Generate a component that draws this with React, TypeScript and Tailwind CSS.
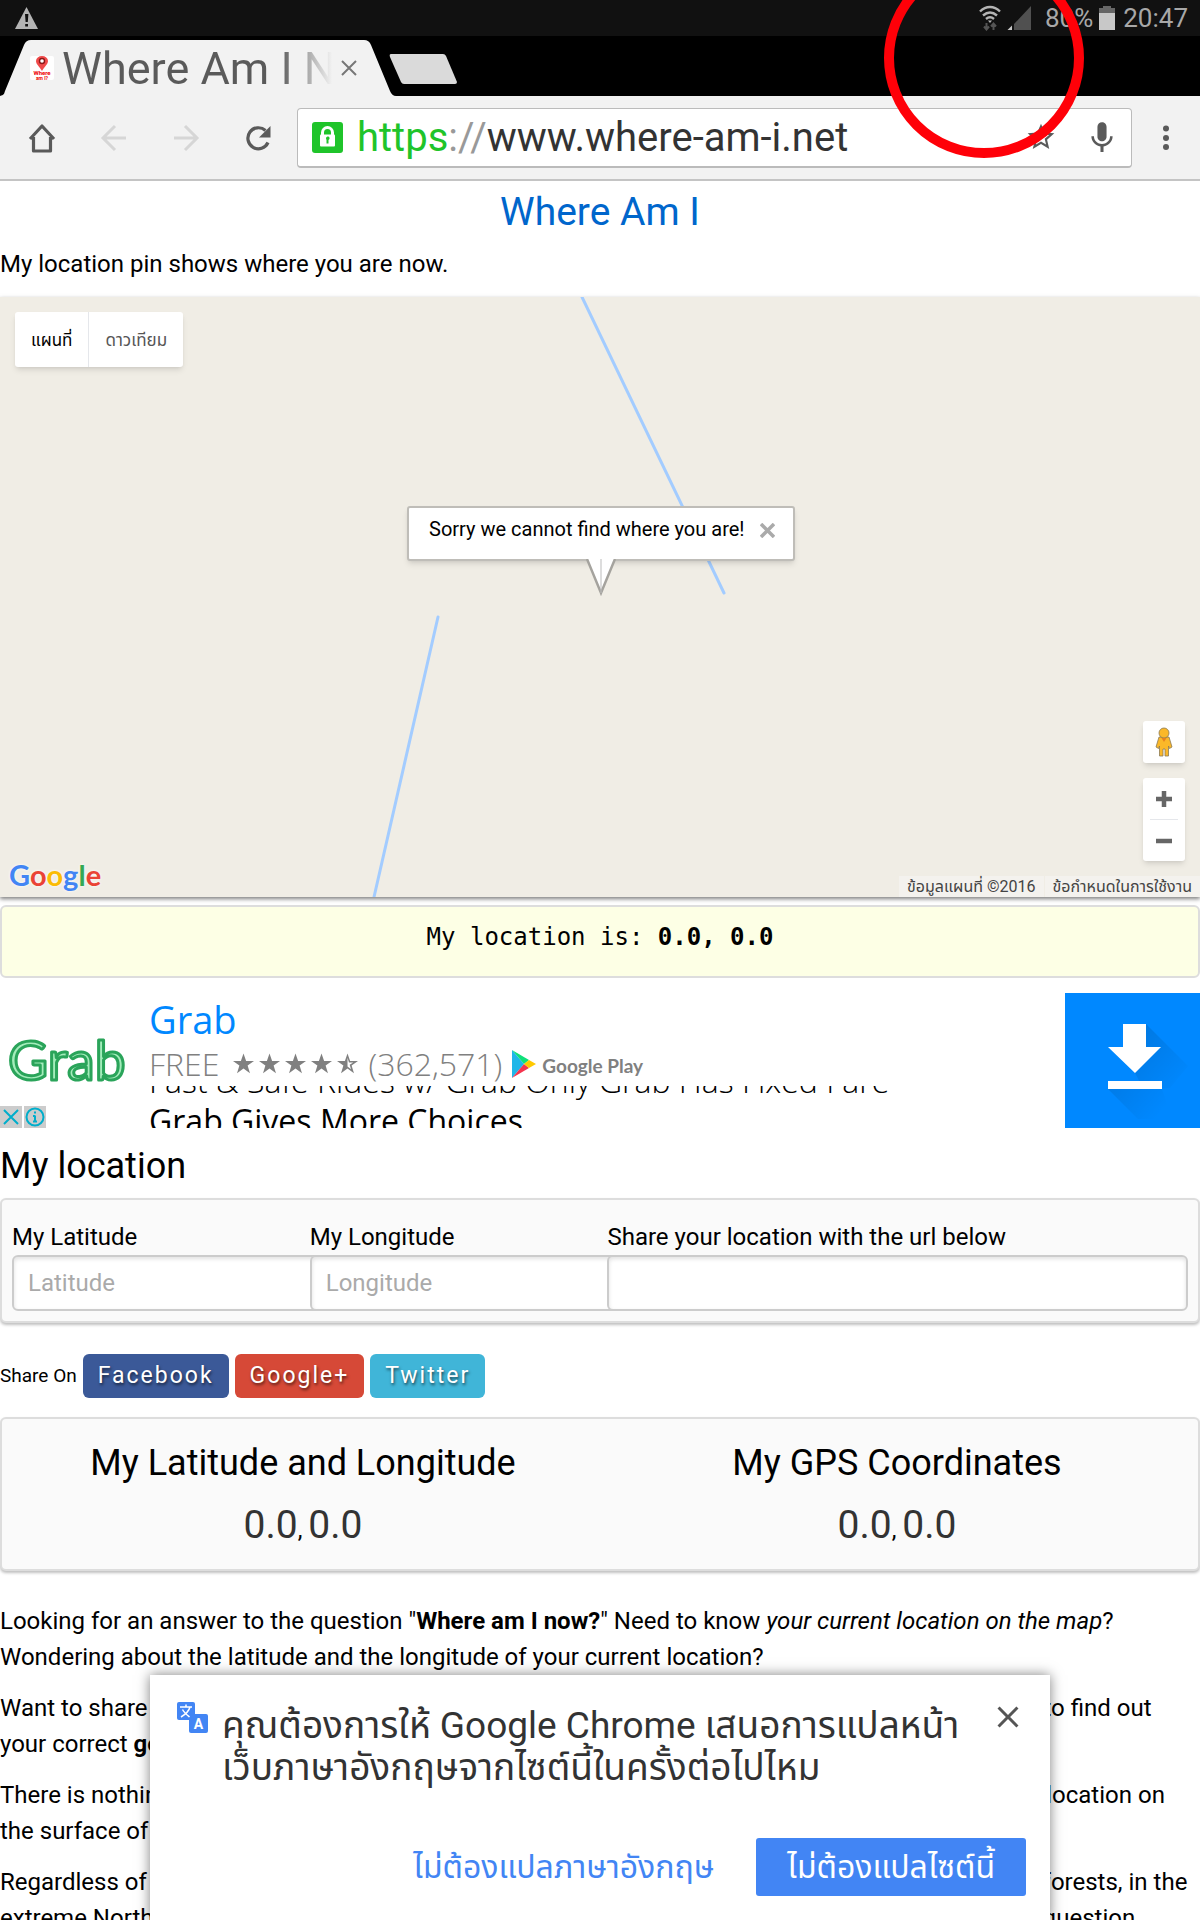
import type { ReactNode } from "react";
import { IoMdMic } from "react-icons/io";
import { MdOutlineStarBorder, MdClose } from "react-icons/md";

const shareLinks = [
  { name: "Facebook", className: "bg-[#3b5998]" },
  { name: "Google+", className: "bg-[#d64937]" },
  { name: "Twitter", className: "bg-[#40b5d8]" },
];

const StatusBar = () => (
  <div className="flex h-9 items-center bg-[#111] pl-[15px] pr-3 text-[26px] leading-9 text-[#a8a8a8]">
    <svg width="23" height="22" viewBox="0 0 23 22">
      <path d="M11.5 0 23 22H0z" fill="#b4b4b4" />
      <path d="M10 7h3.4l-.6 8h-2.2zM10.2 17h2.8v2.6h-2.8z" fill="#111" />
    </svg>
    <div className="ml-auto flex items-center">
      <svg width="22" height="26" viewBox="0 0 22 26" fill="none" stroke="#b4b4b4" strokeWidth="2.4">
        <path d="M1 6.5c6-6 14-6 20 0M4 10.5c4.500-4 9.500-4 14 0M7 14c2.800-2.300 5.200-2.300 8 0" />
        <path d="M9 15.500h4L11 18z" fill="#b4b4b4" stroke="none" />
        <path d="M7.500 18v6M5 21.500l2.500 3 2.500-3M14.500 25v-6M12 21.500l2.500-3 2.500 3" stroke="#555" strokeWidth="2" />
      </svg>
      <svg className="ml-1.5" width="24" height="24" viewBox="0 0 24 24">
        <path d="M24 0v24H7V18z" fill="#505050" />
        <path d="M5 19.500V24H.5z" fill="#c8c8c8" />
      </svg>
      <span className="ml-3.5">80%</span>
      <svg className="ml-1.5" width="16" height="24" viewBox="0 0 16 24">
        <path d="M4 0h8v2h4v6H0V2h4z" fill="#666" />
        <path d="M0 7h16v17H0z" fill="#c8c8c8" />
      </svg>
      <span className="ml-2">20:47</span>
    </div>
  </div>
);

const TabStrip = () => (
  <div className="flex h-[60px] bg-black">
    <div className="relative mt-1 h-14 w-[396px]">
      <svg className="absolute inset-0" width="396" height="56" viewBox="0 0 396 56">
        <path d="M0 56C4 55 4 54 5 51L24 5Q26 0 31 0H364Q369 0 371 5L390 51Q392 56 396 56z" fill="#f2f2f2" />
      </svg>
      <div className="relative flex h-full items-center pl-[30px]">
        <svg width="24" height="24" viewBox="0 0 24 24">
          <rect width="24" height="24" rx="2" fill="#fff" />
          <path d="M12 15C9 10 6 8 6 5a6 5 0 0 1 12 0c0 3-3 5-6 10z" fill="#f04a4a" />
          <circle cx="12" cy="5" r="3.200" fill="#8c1818" />
          <circle cx="12" cy="5" r="1.800" fill="#fff" />
          <text x="12" y="19" textAnchor="middle" fontSize="6" fontWeight="700" fill="#e00">Where</text>
          <text x="12" y="24" textAnchor="middle" fontSize="5" fontWeight="700" fill="#e00">am I?</text>
        </svg>
        <span className="ml-2 w-[270px] overflow-hidden whitespace-nowrap bg-linear-to-r from-[#5a5a5a] from-80% to-[#f2f2f2] bg-clip-text pt-0.5 text-[45px] leading-[54px] text-transparent">
          Where Am I Now
        </span>
        <button aria-label="Close tab" className="ml-2 text-[#777]">
          <svg width="18" height="18" viewBox="0 0 18 18" stroke="currentColor" strokeWidth="2">
            <path d="M2 2l14 14M16 2 2 16" />
          </svg>
        </button>
      </div>
    </div>
    <button aria-label="New tab" className="-ml-2 mt-[18px] h-[30px]">
      <svg width="69" height="30" viewBox="0 0 69 30">
        <path d="M3 0H55Q57 0 58 2L69 28Q69 30 67 30H16Q14 30 13 28L2 3Q1 0 3 0z" fill="#dadada" />
      </svg>
    </button>
  </div>
);

const Toolbar = () => (
  <div className="flex h-[85px] items-center border-b-2 border-[#c4c4c4] bg-[#f2f2f2] pl-6 text-[#5a5a5a]">
    <button aria-label="Home">
      <svg width="36" height="36" viewBox="0 0 36 36" fill="none" stroke="currentColor" strokeWidth="3.200">
        <path d="M6 19 18 6l12 13M9.500 17v14h17V17" strokeLinejoin="round" />
      </svg>
    </button>
    <button aria-label="Back" className="ml-9 text-[#d6d6d6]">
      <svg width="36" height="36" viewBox="0 0 36 36" fill="none" stroke="currentColor" strokeWidth="3">
        <path d="M30 18H8M19 6 7 18l12 12" />
      </svg>
    </button>
    <button aria-label="Forward" className="ml-9 text-[#d6d6d6]">
      <svg width="36" height="36" viewBox="0 0 36 36" fill="none" stroke="currentColor" strokeWidth="3">
        <path d="M6 18h22M17 6l12 12-12 12" />
      </svg>
    </button>
    <button aria-label="Reload" className="ml-9">
      <svg width="36" height="36" viewBox="0 0 36 36">
        <path d="M28 22.500A10.500 10.500 0 1 1 25.500 10.500" fill="none" stroke="currentColor" strokeWidth="3.200" />
        <path d="M30.500 6v11.500H19z" fill="currentColor" />
      </svg>
    </button>
    <div className="ml-[21px] flex h-[60px] flex-1 items-center rounded-sm border border-b-2 border-[#bbb] bg-white pl-3.5 pr-3">
      <svg width="31" height="31" viewBox="0 0 31 31">
        <rect width="31" height="31" rx="3" fill="#1fc42a" />
        <path d="M10.500 14v-3.500a5 5 0 0 1 10 0V14" fill="none" stroke="#fff" strokeWidth="3" />
        <rect x="8" y="12.500" width="15" height="12" rx="1" fill="#fff" />
        <path d="M14 16.500a1.800 1.800 0 1 1 2.500 1.500v3.500h-2V18z" fill="#1fc42a" />
      </svg>
      <a href="https://www.where-am-i.net" className="ml-3.5 flex-1 whitespace-nowrap pt-0.5 text-[40px] leading-[54px] text-[#333]">
        <span className="text-[#1fc42a]">https</span>
        <span className="text-[#999]">://</span>www.where-am-i.net
      </a>
      <button aria-label="Bookmark" className="text-[32px]">
        <MdOutlineStarBorder />
      </button>
      <button aria-label="Voice search" className="ml-7 text-[34px]">
        <IoMdMic />
      </button>
    </div>
    <button aria-label="Menu" className="mx-[18px]">
      <svg width="32" height="32" viewBox="0 0 32 32" fill="currentColor">
        <circle cx="16" cy="6.500" r="3" />
        <circle cx="16" cy="16" r="3" />
        <circle cx="16" cy="25" r="3" />
      </svg>
    </button>
  </div>
);

const MapView = () => (
  <div className="relative h-[600px] overflow-hidden bg-[#f0ede5]">
    <svg className="absolute left-1/2 top-0 -ml-[600px]" width="1200" height="600" stroke="#a3ccff" strokeWidth="3" strokeLinecap="round">
      <path d="M582 0 724 296M438 320 374 600" />
    </svg>
    <div className="absolute left-[15px] top-[15px] flex rounded-[3px] bg-white text-[17px] shadow-md">
      <button className="h-[55px] border-r border-gray-200 px-4 pt-0.5 text-black">แผนที่</button>
      <button className="h-[55px] px-4 pt-0.5 text-[#565656]">ดาวเทียม</button>
    </div>
    <div className="absolute left-1/2 top-[209px] -ml-[193px] flex h-[55px] w-[388px] items-start rounded-[3px] border-2 border-[#bfbdb8] bg-white pl-5 shadow-md">
      <p className="pt-[7px] text-[20px] leading-[28px]">Sorry we cannot find where you are!</p>
      <button aria-label="Close" className="ml-auto mr-[18px] mt-[15px] text-[#aaa]">
        <svg width="15" height="15" viewBox="0 0 15 15" stroke="currentColor" strokeWidth="3.500">
          <path d="M1 1l13 13M14 1 1 14" />
        </svg>
      </button>
      <svg className="absolute left-1/2 top-[51px] -ml-[15px]" width="30" height="38" viewBox="0 0 30 38">
        <path d="M1 0 15 34 29 0" fill="#fff" stroke="#a5a39e" strokeWidth="2.500" />
        <path d="M15 0v34" stroke="#bbb" />
      </svg>
    </div>
    <div className="absolute bottom-9 right-[15px] flex w-[42px] flex-col gap-[15px]">
      <button aria-label="Street View" className="flex h-[42px] items-center justify-center rounded-[3px] bg-white shadow-md">
        <svg width="18" height="30" viewBox="0 0 18 30" fill="#fbb829" stroke="#8a7a55" strokeWidth=".8">
          <path d="M4 10h10l3 10-2.500 1.500L13.500 19v10H10v-7H8v7H4.500V19l-1 2.500L1 20z" />
          <circle cx="9" cy="6" r="5" />
          <path d="M6.500 11h5L9 15z" fill="#e8821e" stroke="none" />
        </svg>
      </button>
      <div className="flex flex-col items-center rounded-[3px] bg-white text-[#666] shadow-md">
        <button aria-label="Zoom in" className="flex h-[41px] w-full items-center justify-center">
          <svg width="16" height="16" viewBox="0 0 16 16" stroke="currentColor" strokeWidth="4.500">
            <path d="M0 8h16M8 0v16" />
          </svg>
        </button>
        <div className="h-px w-7 bg-gray-200" />
        <button aria-label="Zoom out" className="flex h-[41px] w-full items-center justify-center">
          <svg width="16" height="16" viewBox="0 0 16 16" stroke="currentColor" strokeWidth="4.500">
            <path d="M0 8h16" />
          </svg>
        </button>
      </div>
    </div>
    <a href="#google" className="absolute bottom-1.5 left-[9px] font-['Lato'] text-[29px] font-bold leading-8 [text-shadow:0_0_3px_white]">
      <span className="text-[#4285f4]">G</span>
      <span className="text-[#ea4335]">o</span>
      <span className="text-[#fbbc05]">o</span>
      <span className="text-[#4285f4]">g</span>
      <span className="text-[#34a853]">l</span>
      <span className="text-[#ea4335]">e</span>
    </a>
    <div className="absolute bottom-0 right-0 flex gap-px text-[16px] leading-[21px] text-[#444]">
      <span className="bg-[#f4f2ee] px-2">ข้อมูลแผนที่ ©2016</span>
      <a href="#terms" className="bg-[#f4f2ee] px-2">ข้อกำหนดในการใช้งาน</a>
    </div>
  </div>
);

const Star = ({ half }: { half?: boolean }) => (
  <svg width="21" height="21" viewBox="0 0 24 23" fill="#808080">
    {half ? (
      <path fillRule="evenodd" d="M12 0 15 8.500H24L16.700 13.800 19.400 22.500 12 17.300 4.600 22.500 7.300 13.800 0 8.500H9zM12 5V15L16 18 14.500 13 18.500 10.300H13.700z" />
    ) : (
      <path d="M12 0 15 8.500H24L16.700 13.800 19.400 22.500 12 17.300 4.600 22.500 7.300 13.800 0 8.500H9z" />
    )}
  </svg>
);

const AdBanner = () => (
  <div className="relative mt-[15px] flex h-[135px] overflow-hidden font-['Open_Sans']">
    <div className="flex w-[149px] shrink-0 items-center pl-2 pt-1">
      <svg width="126" height="66" viewBox="0 0 126 66" fontFamily="Lato" fontSize="55">
        <text x="0" y="50" fill="#a4ecbb" stroke="#2aa45a" strokeWidth="3" strokeLinejoin="round">Grab</text>
      </svg>
    </div>
    <div className="flex min-w-0 flex-1 flex-col">
      <a href="#grab" className="h-[51px] text-[38px] leading-[53px] text-[#0088ff]">Grab</a>
      <div className="mb-[3px] flex h-[39px] shrink-0 items-center text-[32px] font-light leading-[34px] text-[#808080]">
        <span>FREE</span>
        <span className="ml-3.5 flex gap-[5px]">
          <Star />
          <Star />
          <Star />
          <Star />
          <Star half />
        </span>
        <span className="ml-2.5">(362,571)</span>
        <svg className="ml-2.5" width="24" height="28" viewBox="0 0 24 28">
          <path d="M0 0v28l12-14z" fill="#1fb6e8" />
          <path d="M0 0l17 10-5 4z" fill="#0fe07a" />
          <path d="M0 28l17-10-5-4z" fill="#f5344e" />
          <path d="M17 10l7 4-7 4-5-4z" fill="#ffc900" />
        </svg>
        <span className="ml-1.5 pt-1 font-['Lato'] text-[19px] font-bold">Google Play</span>
      </div>
      <div className="flex h-[42px] flex-col overflow-hidden text-[32px] leading-[40px]">
        <p className="-mt-[25px] shrink-0 whitespace-nowrap font-light">Fast &amp; Safe Rides w/ Grab Only Grab Has Fixed Fare</p>
        <p className="shrink-0 whitespace-nowrap">Grab Gives More Choices</p>
      </div>
    </div>
    <button aria-label="Install" className="h-[135px] w-[135px] shrink-0 bg-[#0088ff]">
      <svg width="135" height="135" viewBox="0 0 135 135">
        <defs>
          <linearGradient id="fade" x1="0" y1="0" x2="1" y2="1">
            <stop offset="0.2" stopColor="#000" stopOpacity=".12" />
            <stop offset="0.8" stopColor="#000" stopOpacity="0" />
          </linearGradient>
        </defs>
        <path d="M81 31l42 42-18 22H78l-8-15zM43 96h54l10 30H73z" fill="url(#fade)" />
        <path d="M58 31h23v23h15L70 80 43 54h15zM43 88h54v8H43z" fill="#fff" />
      </svg>
    </button>
    <div className="absolute bottom-0 left-0 flex gap-0.5 text-[#00aecb]">
      <button aria-label="Close ad" className="bg-[#ccc]">
        <svg width="22" height="22" viewBox="0 0 22 22" stroke="currentColor" strokeWidth="2">
          <path d="M4 4l14 14M18 4 4 18" />
        </svg>
      </button>
      <button aria-label="Ad info" className="bg-[#ccc]">
        <svg width="22" height="22" viewBox="0 0 22 22" fill="none" stroke="currentColor" strokeWidth="2">
          <circle cx="11" cy="11" r="8.500" />
          <path d="M11 9.500v6M9 10h2M9 15.500h4M10 6.500h2" />
        </svg>
      </button>
    </div>
  </div>
);

const inputClass =
  "h-14 rounded-md border-2 border-[#ccc] bg-white px-3.5 text-[24px] placeholder:text-[#aaa] shadow-[inset_0_2px_4px_rgba(0,0,0,0.12)] outline-none";

const Panel = ({ children, className }: { children: ReactNode; className: string }) => (
  <div className={`rounded-md border-2 border-[#ddd] bg-[#fafafa] shadow-[0_2px_3px_rgba(0,0,0,0.25)] ${className}`}>{children}</div>
);

const LocationForm = () => (
  <Panel className="grid grid-cols-[1fr_1fr_1.95fr] px-[10px] pb-[10px] pt-[19px] text-[24px] leading-9">
    <div className="flex min-w-0 flex-col">
      <label htmlFor="latitude">My Latitude</label>
      <input id="latitude" placeholder="Latitude" className={`${inputClass} w-[120%]`} />
    </div>
    <div className="relative flex min-w-0 flex-col">
      <label htmlFor="longitude">My Longitude</label>
      <input id="longitude" placeholder="Longitude" className={`${inputClass} w-[120%]`} />
    </div>
    <div className="relative flex min-w-0 flex-col">
      <label htmlFor="url">Share your location with the url below</label>
      <input id="url" className={inputClass} />
    </div>
  </Panel>
);

const Coordinates = ({ title }: { title: string }) => (
  <div className="flex-1 text-center">
    <h3 className="text-[36px] leading-[54px]">{title}</h3>
    <p className="mt-2 text-[24px] leading-[54px]">
      <span className="text-[39px] text-[#333]">0.0</span>, <span className="text-[39px] text-[#333]">0.0</span>
    </p>
  </div>
);

const TranslateBar = () => (
  <div className="absolute bottom-0 left-1/2 flex h-[245px] w-3/4 -translate-x-1/2 flex-col bg-white pl-[27px] pr-6 pt-6 text-[#333] shadow-[0_0_12px_rgba(0,0,0,0.5)]">
    <div className="flex items-start">
      <svg className="mt-[3px] shrink-0" width="31" height="31" viewBox="0 0 31 31">
        <rect width="18" height="18" rx="2" fill="#4285f4" />
        <rect x="12" y="12" width="19" height="19" rx="2" fill="#4285f4" />
        <path d="M3 5h12M9 2.500V5M13 5c-1 4-4 7-9 10M5.500 7.500c1.500 3 4 5 7 7.500" fill="none" stroke="#fff" strokeWidth="1.500" />
        <text x="21.500" y="26.500" textAnchor="middle" fontSize="14" fontWeight="700" fill="#fff">A</text>
      </svg>
      <p className="ml-3.5 flex-1 whitespace-nowrap pt-1.5 text-[37px] leading-[42px]">
        คุณต้องการให้ Google Chrome เสนอการแปลหน้า
        <br />
        เว็บภาษาอังกฤษจากไซต์นี้ในครั้งต่อไปไหม
      </p>
      <button aria-label="Close" className="text-[36px] text-[#555]">
        <MdClose />
      </button>
    </div>
    <div className="mt-auto flex items-center justify-end gap-[42px] pb-6 text-[32px]">
      <button className="text-[#4285f4]">ไม่ต้องแปลภาษาอังกฤษ</button>
      <button className="h-[58px] rounded-[3px] bg-[#4285f4] px-[31px] text-white">ไม่ต้องแปลไซต์นี้</button>
    </div>
  </div>
);

export default function App() {
  return (
    <div className="relative flex h-screen flex-col overflow-hidden bg-white font-['Roboto','Noto_Sans_Thai',sans-serif] text-black">
      <StatusBar />
      <TabStrip />
      <Toolbar />
      <main className="min-h-0 flex-1 overflow-hidden">
        <h1 className="pt-1 text-center text-[39px] leading-[54px] text-[#0066cc]">Where Am I</h1>
        <p className="mb-3 mt-1 text-[24px] leading-[42px]">My location pin shows where you are now.</p>
        <div className="shadow-[0_2px_4px_rgba(0,0,0,0.5)]">
          <MapView />
        </div>
        <div className="mt-2 h-[73px] rounded-md border-2 border-[#ddd] bg-[#fdffe5] pt-3 text-center font-['DejaVu_Sans_Mono',monospace] text-[24px] leading-9">
          My location is: <b>0.0, 0.0</b>
        </div>
        <AdBanner />
        <h2 className="mb-[5px] mt-[11px] text-[36px] leading-[54px]">My location</h2>
        <LocationForm />
        <div className="mb-[19px] mt-[31px] flex items-center gap-1.5 text-[19px]">
          <span>Share On</span>
          {shareLinks.map(({ name, className }) => (
            <a
              key={name}
              href="#share"
              className={`flex h-11 items-center rounded-md px-[15px] text-[23px] tracking-[2px] text-white [text-shadow:1px_2px_3px_rgba(0,0,0,0.6)] ${className}`}
            >
              {name}
            </a>
          ))}
        </div>
        <Panel className="flex px-1 pb-3 pt-[17px]">
          <Coordinates title="My Latitude and Longitude" />
          <Coordinates title="My GPS Coordinates" />
        </Panel>
        <div className="mt-8 flex flex-col gap-[15px] text-[24px] leading-9">
          <p>
            Looking for an answer to the question "<b>Where am I now?</b>" Need to know <i>your current location on the map</i>?
            <br />
            Wondering about the latitude and the longitude of your current location?
          </p>
          <p>
            Want to share your current location with your friends and family? Use our free location finder page to find out
            <br />
            your correct <b>geographic location</b> and share it with anyone you like.
          </p>
          <p>
            There is nothing worse than being lost somewhere and not knowing how to describe your physical location on
            <br />
            the surface of the planet.
          </p>
          <p>
            Regardless of where you are right now, be it in the middle of the ocean, in the deepest tropical rain forests, in the
            <br />
            extreme North or on top of a mountain, this service will always be happy to give an answer to your question
          </p>
        </div>
      </main>
      <TranslateBar />
      <svg className="pointer-events-none absolute -top-[42px] right-[116px]" width="200" height="200" viewBox="0 0 200 200">
        <circle cx="100" cy="100" r="95" fill="none" stroke="#ff0008" strokeWidth="10" />
      </svg>
    </div>
  );
}
